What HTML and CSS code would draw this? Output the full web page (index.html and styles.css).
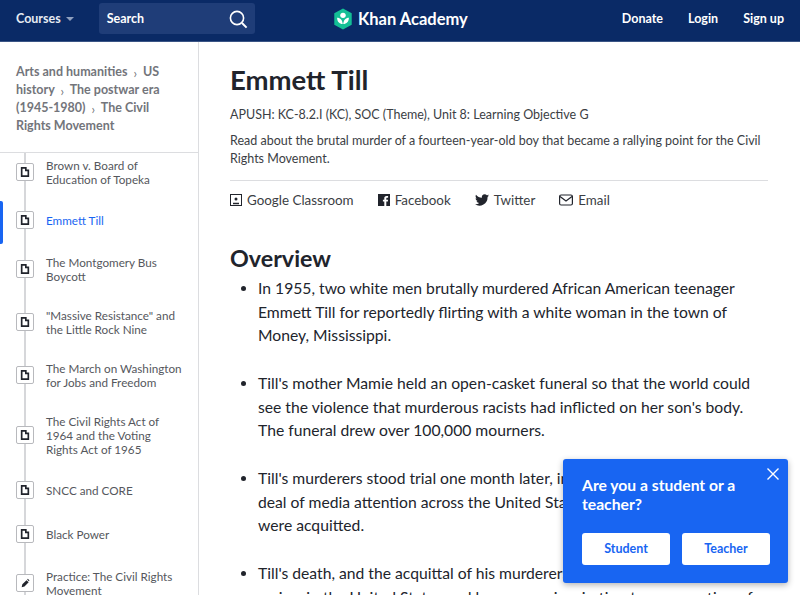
FILE: index.html
```html
<!DOCTYPE html>
<html lang="en">
<head>
    <meta charset="UTF-8">
    <title>Emmett Till</title>
    <link rel="stylesheet" href="styles.css">
</head>
<body>
    <header class="topbar">
        <div class="topbar-left">
            <span class="courses">Courses <i class="caret"></i></span>
            <div class="search">
                <span>Search</span>
                <svg width="20" height="20" viewBox="0 0 20 20" fill="none" stroke="#fff" stroke-width="1.6"><circle cx="9" cy="9" r="6.6"/><path d="M14 14l4.6 4.6" stroke-width="2"/></svg>
            </div>
        </div>
        <div class="logo">
            <svg width="20" height="22" viewBox="0 0 22 24"><path d="M11 .5l9.6 5.2v12.6L11 23.5 1.400 18.300V5.700z" fill="#14bf96"/><circle cx="11" cy="8" r="3" fill="#fff"/><path d="M4.500 10.500c3.500 0 6 2.500 6.200 7-3.700-.2-6.200-2.800-6.200-7zM17.500 10.500c-3.500 0-6 2.500-6.200 7 3.700-.2 6.200-2.800 6.200-7z" fill="#fff"/></svg>
            <span>Khan Academy</span>
        </div>
        <nav class="topbar-right">
            <span>Donate</span>
            <span>Login</span>
            <span>Sign up</span>
        </nav>
    </header>

    <div class="layout">
        <aside class="sidebar">
            <div class="crumbs">
                Arts and humanities <span class="sep">›</span> US history <span class="sep">›</span> The postwar era (1945-1980) <span class="sep">›</span> The Civil Rights Movement
            </div>
            <div class="lesson-scroll">
                <ul class="lessons">
                    <li class="h53"><span class="ico"><svg viewBox="0 0 12 12"><path d="M2 1h5v3h3v7H2z" class="doc"/></svg></span><span>Brown v. Board of Education of Topeka</span></li>
                    <li class="h44 active"><span class="ico"><svg viewBox="0 0 12 12"><path d="M2 1h5v3h3v7H2z" class="doc"/></svg></span><span>Emmett Till</span></li>
                    <li class="h53"><span class="ico"><svg viewBox="0 0 12 12"><path d="M2 1h5v3h3v7H2z" class="doc"/></svg></span><span>The Montgomery Bus Boycott</span></li>
                    <li class="h53"><span class="ico"><svg viewBox="0 0 12 12"><path d="M2 1h5v3h3v7H2z" class="doc"/></svg></span><span>"Massive Resistance" and the Little Rock Nine</span></li>
                    <li class="h53"><span class="ico"><svg viewBox="0 0 12 12"><path d="M2 1h5v3h3v7H2z" class="doc"/></svg></span><span>The March on Washington for Jobs and Freedom</span></li>
                    <li class="h67"><span class="ico"><svg viewBox="0 0 12 12"><path d="M2 1h5v3h3v7H2z" class="doc"/></svg></span><span>The Civil Rights Act of 1964 and the Voting Rights Act of 1965</span></li>
                    <li class="h44"><span class="ico"><svg viewBox="0 0 12 12"><path d="M2 1h5v3h3v7H2z" class="doc"/></svg></span><span>SNCC and CORE</span></li>
                    <li class="h44"><span class="ico"><svg viewBox="0 0 12 12"><path d="M2 1h5v3h3v7H2z" class="doc"/></svg></span><span>Black Power</span></li>
                    <li class="h53"><span class="ico"><svg viewBox="0 0 12 12"><path d="M2 11l.8-3.400 5-5 2.600 2.600-5 5zM8.600 1.800l.8-.8 2 2-.8.8z" fill="#21242c"/></svg></span><span>Practice: The Civil Rights Movement</span></li>
                </ul>
            </div>
        </aside>

        <main class="content">
            <h1>Emmett Till</h1>
            <p class="standards">APUSH: KC-8.2.I (KC), SOC (Theme), Unit 8: Learning Objective G</p>
            <p class="desc">Read about the brutal murder of a fourteen-year-old boy that became a rallying point for the Civil Rights Movement.</p>
            <div class="share">
                <span><svg width="12" height="12" viewBox="0 0 12 12" fill="none" stroke="#21242c"><rect x=".5" y=".5" width="11" height="11"/><circle cx="6" cy="5" r="1.500" fill="#21242c" stroke="none"/><path d="M3 9.500h6" stroke-width="1.500"/></svg>Google Classroom</span>
                <span><svg width="12" height="12" viewBox="0 0 12 12"><path d="M0 0h12v12H8.300V7.500h1.500l.3-1.800H8.300V4.600c0-.6.200-.9.900-.9h.9V2.100H8.600C6.900 2.100 6.300 3 6.300 4.400v1.300H4.900v1.800h1.400V12H0z" fill="#21242c"/></svg>Facebook</span>
                <span><svg width="14" height="12" viewBox="0 0 24 20"><path d="M24 2.400c-.9.400-1.800.7-2.800.8 1-.6 1.800-1.600 2.200-2.700-1 .6-2 1-3.100 1.200A4.900 4.900 0 0 0 11.900 6.200C7.800 6 4.200 4 1.700.9c-1.300 2.200-.7 5.100 1.500 6.600-.8 0-1.600-.2-2.200-.6 0 2.400 1.700 4.400 3.900 4.900-.7.200-1.500.2-2.200.1.600 2 2.400 3.400 4.600 3.400A9.900 9.900 0 0 1 0 17.300 14 14 0 0 0 21.500 4.900c1-.7 1.800-1.500 2.500-2.500z" fill="#21242c"/></svg>Twitter</span>
                <span><svg width="14" height="12" viewBox="0 0 14 12" fill="none" stroke="#21242c" stroke-width="1.200"><rect x=".6" y="1" width="12.800" height="10" rx="1.500"/><path d="M1 2.500l6 4.500 6-4.500"/></svg>Email</span>
            </div>
            <h2>Overview</h2>
            <ul class="points">
                <li>In 1955, two white men brutally murdered African American teenager Emmett Till for reportedly flirting with a white woman in the town of Money, Mississippi.</li>
                <li>Till's mother Mamie held an open-casket funeral so that the world could see the violence that murderous racists had inflicted on her son's body. The funeral drew over 100,000 mourners.</li>
                <li>Till's murderers stood trial one month later, in a case that attracted a great deal of media attention across the United States. The two defendants were acquitted.</li>
                <li>Till's death, and the acquittal of his murderers, drew attention to ongoing racism in the United States and became an inspiration to a generation of activists.</li>
            </ul>
        </main>
    </div>

    <div class="popup">
        <svg class="popup-close" width="12" height="12" viewBox="0 0 12 12" stroke="#fff" stroke-width="1.400"><path d="M.5.500l11 11M11.500.500l-11 11"/></svg>
        <div class="popup-title">Are you a student or a teacher?</div>
        <div class="popup-btns">
            <button>Student</button>
            <button>Teacher</button>
        </div>
    </div>
</body>
</html>
```

FILE: styles.css
```css
html, body {
    margin: 0;
    height: 595px;
    overflow: hidden;
}
body {
    font-family: Lato, "Open Sans", sans-serif;
    color: #21242c;
    background: #fff;
}
.topbar {
    height: 42px;
    box-sizing: border-box;
    background: #0a2a66;
    border-bottom: 1px solid #3b5585;
    color: #fff;
    font-size: 12.5px;
    font-weight: 700;
    display: flex;
    align-items: center;
    justify-content: space-between;
    padding: 0 16px 4px;
    position: relative;
}
.topbar-left {
    display: flex;
    align-items: center;
    gap: 25px;
}
.courses {
    color: #e6eaf2;
    display: flex;
    align-items: center;
    gap: 5px;
}
.caret {
    width: 0;
    height: 0;
    border: 4px solid transparent;
    border-top: 4px solid #8fa0bf;
    border-bottom: 0;
}
.search {
    width: 156px;
    height: 31px;
    box-sizing: border-box;
    background: #1f3d78;
    border-radius: 3px;
    padding: 0 7px 0 8px;
    display: flex;
    align-items: center;
    justify-content: space-between;
}
.logo {
    position: absolute;
    left: 333px;
    top: 8px;
    display: flex;
    align-items: center;
    gap: 5px;
    font-size: 16.5px;
}
.topbar-right {
    display: flex;
    gap: 25px;
}
.layout {
    display: flex;
}
.sidebar {
    width: 198px;
    height: 553px;
    border-right: 1px solid #dcdde0;
    flex-shrink: 0;
    overflow: hidden;
}
.crumbs {
    padding: 21px 30px 17px 16px;
    height: 72px;
    font-size: 12.5px;
    line-height: 18px;
    font-weight: 700;
    color: #73757b;
    border-bottom: 1px solid #dcdde0;
}
.sep {
    font-weight: 400;
    margin: 0 3px;
    line-height: 0;
    vertical-align: -2px;
}
.lesson-scroll {
    height: 442px;
    overflow: hidden;
}
.lessons {
    list-style: none;
    margin: -8px 0 0;
    padding: 0;
    position: relative;
}
.lessons::before {
    content: "";
    position: absolute;
    left: 24px;
    top: 0;
    bottom: 0;
    width: 2px;
    background: #d6d7da;
}
.lessons li {
    display: flex;
    align-items: center;
    gap: 12px;
    padding-left: 16px;
    padding-right: 14px;
    font-size: 11.7px;
    line-height: 14px;
    color: #55575d;
    position: relative;
}
.h44 { height: 44px; }
.h53 { height: 53px; }
.h67 { height: 67px; }
.lessons li.active {
    color: #1865f2;
}
.lessons li.active::before {
    content: "";
    position: absolute;
    left: 0;
    top: 3px;
    bottom: -2px;
    width: 3px;
    background: #1865f2;
    border-radius: 0 2px 2px 0;
}
.ico {
    width: 18px;
    height: 18px;
    box-sizing: border-box;
    background: #fff;
    border: 1px solid #b8b9bd;
    border-radius: 2px;
    flex-shrink: 0;
    display: flex;
    align-items: center;
    justify-content: center;
    position: relative;
}
.ico svg {
    width: 10px;
    height: 10px;
}
.doc {
    fill: none;
    stroke: #21242c;
    stroke-width: 2;
}
.content {
    padding: 20px 32px 0 31px;
    flex: 1;
    min-width: 0;
}
h1 {
    font-size: 27.5px;
    line-height: 36px;
    margin: 0 0 8px;
}
.standards, .desc {
    font-size: 12.5px;
    line-height: 18px;
    margin: 0;
    color: #3b3e44;
}
.standards {
    margin-bottom: 8px;
}
.share {
    border-top: 1px solid #dcdde0;
    margin-top: 12px;
    padding-top: 10px;
    display: flex;
    gap: 24px;
    font-size: 13.4px;
    line-height: 18px;
    color: #3b3e44;
}
.share span {
    display: flex;
    align-items: center;
    gap: 5px;
}
h2 {
    font-size: 23.3px;
    line-height: 30px;
    font-weight: 700;
    margin: 34px 0 4px;
}
.points {
    margin: 0;
    padding: 0 0 0 28px;
    font-size: 15.7px;
    line-height: 23.5px;
    color: #21242c;
}
.points li {
    margin-bottom: 24.5px;
}
.popup {
    position: absolute;
    left: 563px;
    top: 459px;
    width: 225px;
    height: 124px;
    box-sizing: border-box;
    background: #1865f2;
    border-radius: 3px;
    box-shadow: 0 2px 6px rgba(0, 0, 0, 0.3);
    color: #fff;
    padding: 17px 18px 0 19px;
}
.popup-close {
    position: absolute;
    right: 9px;
    top: 9px;
}
.popup-title {
    font-size: 15.7px;
    line-height: 19px;
    font-weight: 700;
}
.popup-btns {
    display: flex;
    gap: 12px;
    margin-top: 19px;
}
.popup-btns button {
    flex: 1;
    height: 32px;
    padding: 0 0 2px;
    border: 0;
    border-radius: 3px;
    background: #fff;
    color: #1865f2;
    font: 700 12.5px Lato, sans-serif;
}
```
